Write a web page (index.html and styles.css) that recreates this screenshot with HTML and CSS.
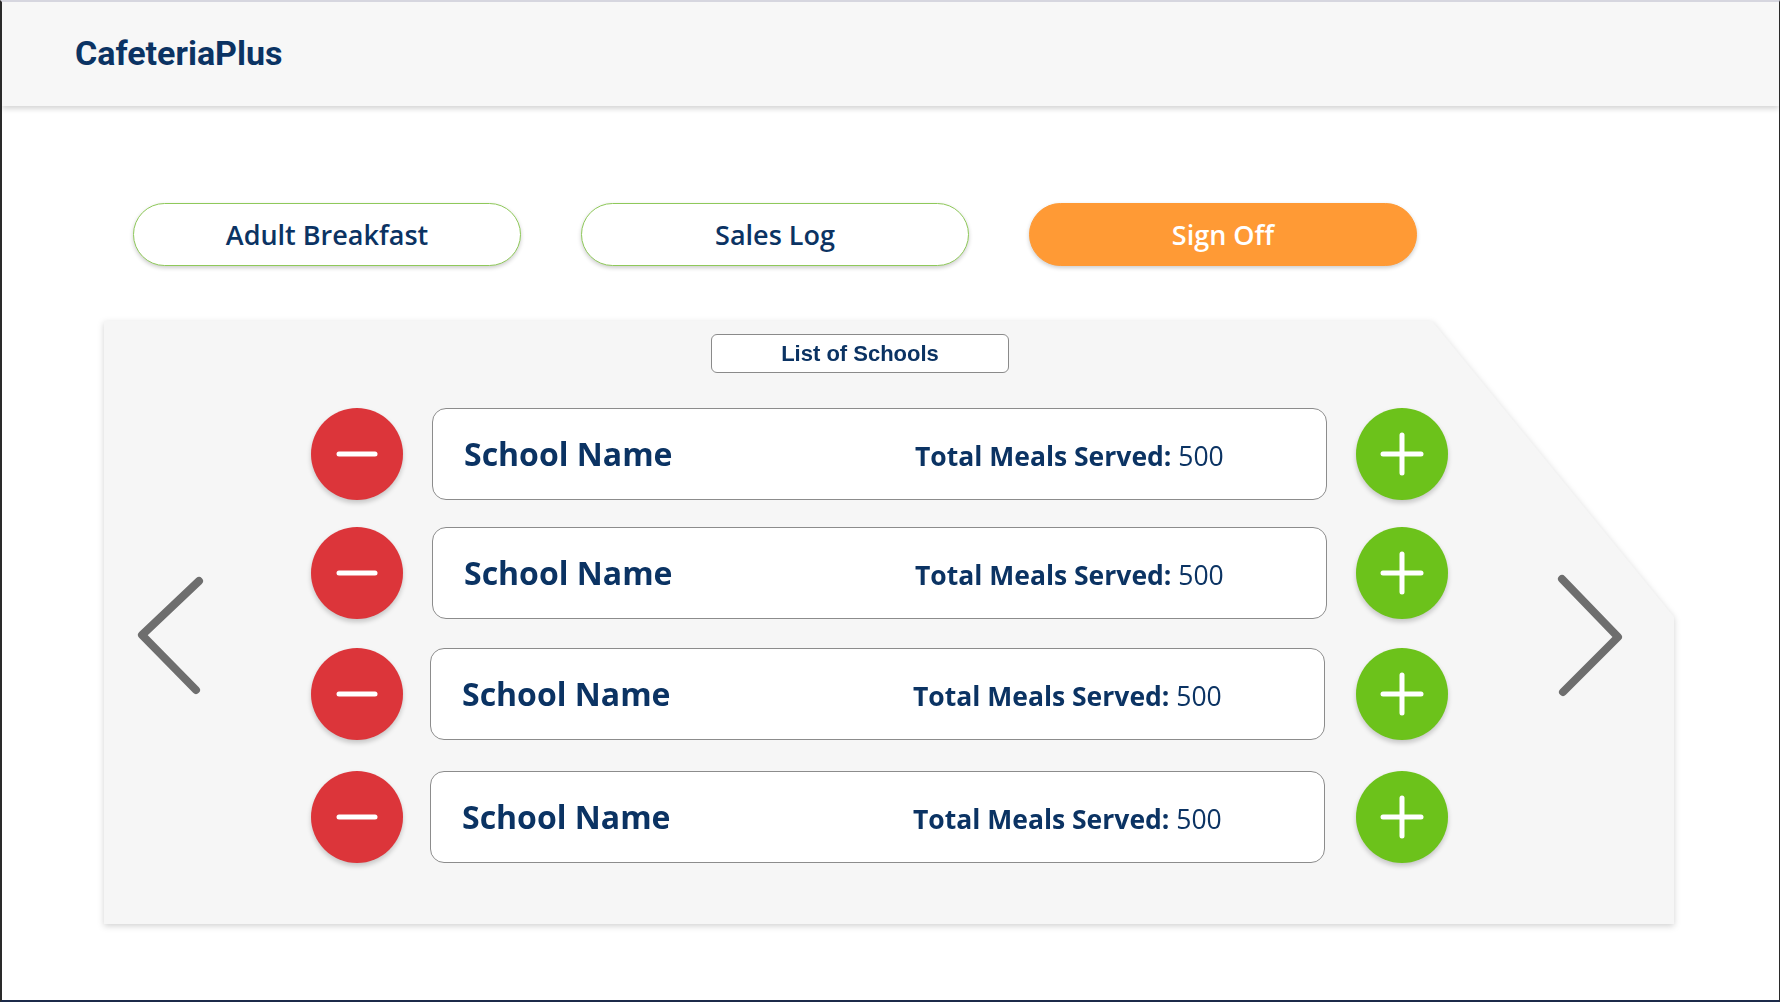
FILE: index.html
```html
<!DOCTYPE html>
<html lang="en">
<head>
<meta charset="utf-8">
<title>CafeteriaPlus</title>
<link rel="stylesheet" href="styles.css">
</head>
<body>
<div class="page">
  <header class="topbar">
    <h1 class="brand">CafeteriaPlus</h1>
  </header>
  <main class="main">
    <nav class="actions">
      <button class="pill pill-outline">Adult Breakfast</button>
      <button class="pill pill-outline">Sales Log</button>
      <button class="pill pill-orange">Sign Off</button>
    </nav>
    <div class="panel-wrap">
      <section class="panel">
        <div class="panel-title">List of Schools</div>
        <div class="carousel">
          <svg class="chev chev-left" width="76" height="122" viewBox="0 0 76 122">
            <polyline points="69,6 12,60 66,115" />
          </svg>
          <div class="rows">
            <div class="row">
              <button class="circle minus"><svg width="42" height="6" viewBox="0 0 42 6"><line x1="3" y1="3" x2="39" y2="3"/></svg></button>
              <div class="card">
                <span class="school">School Name</span>
                <span class="meals"><b>Total Meals Served:</b> 500</span>
              </div>
              <button class="circle plus"><svg width="44" height="44" viewBox="0 0 44 44"><line x1="3" y1="22" x2="41" y2="22"/><line x1="22" y1="3" x2="22" y2="41"/></svg></button>
            </div>
            <div class="row">
              <button class="circle minus"><svg width="42" height="6" viewBox="0 0 42 6"><line x1="3" y1="3" x2="39" y2="3"/></svg></button>
              <div class="card">
                <span class="school">School Name</span>
                <span class="meals"><b>Total Meals Served:</b> 500</span>
              </div>
              <button class="circle plus"><svg width="44" height="44" viewBox="0 0 44 44"><line x1="3" y1="22" x2="41" y2="22"/><line x1="22" y1="3" x2="22" y2="41"/></svg></button>
            </div>
            <div class="row row-third">
              <button class="circle minus"><svg width="42" height="6" viewBox="0 0 42 6"><line x1="3" y1="3" x2="39" y2="3"/></svg></button>
              <div class="card card-shift">
                <span class="school">School Name</span>
                <span class="meals"><b>Total Meals Served:</b> 500</span>
              </div>
              <button class="circle plus"><svg width="44" height="44" viewBox="0 0 44 44"><line x1="3" y1="22" x2="41" y2="22"/><line x1="22" y1="3" x2="22" y2="41"/></svg></button>
            </div>
            <div class="row row-fourth">
              <button class="circle minus"><svg width="42" height="6" viewBox="0 0 42 6"><line x1="3" y1="3" x2="39" y2="3"/></svg></button>
              <div class="card card-shift">
                <span class="school">School Name</span>
                <span class="meals"><b>Total Meals Served:</b> 500</span>
              </div>
              <button class="circle plus"><svg width="44" height="44" viewBox="0 0 44 44"><line x1="3" y1="22" x2="41" y2="22"/><line x1="22" y1="3" x2="22" y2="41"/></svg></button>
            </div>
          </div>
          <svg class="chev chev-right" width="70" height="126" viewBox="0 0 70 126">
            <polyline points="7,6 63,64 8,119" />
          </svg>
        </div>
      </section>
    </div>
  </main>
</div>
</body>
</html>
```

FILE: styles.css
```css
* { box-sizing: border-box; }

html, body {
  margin: 0;
  padding: 0;
  background: #ffffff;
}

.page {
  width: 1780px;
  height: 1002px;
  border-top: 2px solid #d6d6df;
  border-left: 2px solid #2a2a2a;
  border-right: 1px solid #2a2a2a;
  border-bottom: 2px solid #1c2a4a;
  background: #ffffff;
  overflow: hidden;
}

.topbar {
  height: 104px;
  background: #f7f7f7;
  box-shadow: 0 3px 5px rgba(0, 0, 0, 0.16);
  display: flex;
  align-items: center;
  padding-left: 73px;
  position: relative;
  z-index: 1;
}

.brand {
  margin: 0;
  font-family: Roboto, "Liberation Sans", sans-serif;
  font-weight: 700;
  font-size: 34px;
  color: #0b3363;
  letter-spacing: 0;
  line-height: 1;
  padding-bottom: 2px;
}

.main {
  padding-top: 97px;
}

.actions {
  display: flex;
  gap: 60px;
  padding-left: 131px;
}

.pill {
  width: 388px;
  height: 63px;
  border-radius: 32px;
  font-family: "Open Sans", "Noto Sans", sans-serif;
  font-size: 27px;
  font-weight: 600;
  display: flex;
  align-items: center;
  justify-content: center;
  padding: 0 0 1px 0;
  cursor: pointer;
  box-shadow: 0 2px 4px rgba(0, 0, 0, 0.2);
}

.pill-outline {
  background: #ffffff;
  border: 1px solid #8fc95a;
  color: #0b3363;
}

.pill-orange {
  background: #ff9a35;
  border: 1px solid #ff9a35;
  color: #ffffff;
}

.panel-wrap {
  margin-top: 55px;
  margin-left: 102px;
  width: 1570px;
  filter: drop-shadow(0 2px 3px rgba(0, 0, 0, 0.18));
}

.panel {
  background: #f6f6f6;
  height: 603px;
  padding-top: 13px;
  clip-path: polygon(0 0, 1328px 0, 100% 296px, 100% 100%, 0 100%);
}

.panel-title {
  margin-left: 607px;
  width: 298px;
  height: 39px;
  background: #ffffff;
  border: 1px solid #8a8a8a;
  border-radius: 6px;
  font-family: "Liberation Sans", Arial, sans-serif;
  font-weight: 700;
  font-size: 22px;
  color: #0b3363;
  display: flex;
  align-items: center;
  justify-content: center;
}

.carousel {
  margin-top: 35px;
  display: flex;
  align-items: center;
}

.chev {
  flex: none;
  fill: none;
  stroke: #6e6e6e;
  stroke-width: 8;
  stroke-linecap: round;
  stroke-linejoin: round;
}

.chev-left {
  margin-left: 26px;
  margin-right: 105px;
}

.chev-right {
  margin-left: 107px;
}

.rows {
  display: flex;
  flex-direction: column;
  gap: 27px;
}

.row {
  display: flex;
  align-items: center;
  gap: 29px;
}

.row-third { margin-top: 2px; }
.row-fourth { margin-top: 4px; }

.circle {
  width: 92px;
  height: 92px;
  border-radius: 50%;
  border: none;
  padding: 0;
  display: flex;
  align-items: center;
  justify-content: center;
  box-shadow: 0 3px 5px rgba(0, 0, 0, 0.2);
  cursor: pointer;
}

.circle svg {
  stroke: #ffffff;
  stroke-width: 5;
  stroke-linecap: round;
}

.minus { background: #dc353a; }
.plus { background: #6cc21b; }

.card {
  width: 895px;
  height: 92px;
  background: #ffffff;
  border: 1px solid #8c8c8c;
  border-radius: 14px;
  display: flex;
  align-items: baseline;
  padding: 23px 0 0 31px;
  color: #0b3363;
  font-family: "Open Sans", "Noto Sans", sans-serif;
}

.card-shift {
  margin-left: -2px;
  margin-right: 2px;
}

.school {
  font-weight: 700;
  font-size: 32px;
  width: 451px;
  flex: none;
}

.meals {
  font-size: 26.5px;
  font-weight: 400;
}

.meals b {
  font-weight: 700;
}
```
